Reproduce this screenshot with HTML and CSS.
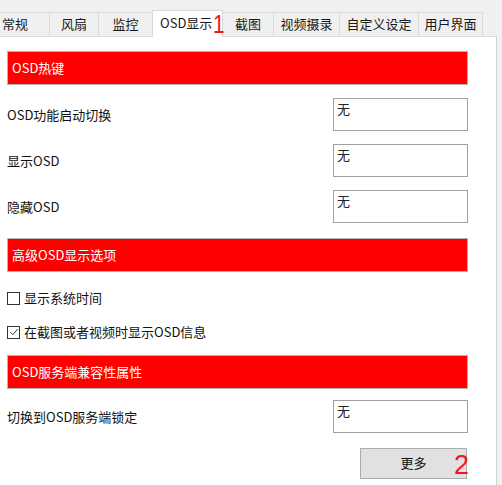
FILE: index.html
```html
<!DOCTYPE html>
<html lang="zh-CN">
<head>
<meta charset="utf-8">
<link rel="stylesheet" href="styles.css">
</head>
<body>
<div class="window">
  <div class="tabs">
    <div class="tab t1">常规</div>
    <div class="tab t2">风扇</div>
    <div class="tab t3">监控</div>
    <div class="tab active t4">OSD显示<span class="mark mark1">1</span></div>
    <div class="tab t5">截图</div>
    <div class="tab t6">视频摄录</div>
    <div class="tab t7">自定义设定</div>
    <div class="tab t8">用户界面</div>
  </div>
  <div class="panel">
    <div class="header h1">OSD热键</div>
    <div class="row r1"><span class="label">OSD功能启动切换</span><div class="field">无</div></div>
    <div class="row r2"><span class="label">显示OSD</span><div class="field">无</div></div>
    <div class="row r3"><span class="label">隐藏OSD</span><div class="field">无</div></div>
    <div class="header h2">高级OSD显示选项</div>
    <div class="check c1"><span class="box"></span><span>显示系统时间</span></div>
    <div class="check c2"><span class="box"><svg viewBox="0 0 12 12" width="10" height="10"><path d="M1.5 6.2 L4.5 9.2 L10.5 2.5" fill="none" stroke="#333" stroke-width="1.2"/></svg></span><span>在截图或者视频时显示OSD信息</span></div>
    <div class="header h3">OSD服务端兼容性属性</div>
    <div class="row r4"><span class="label">切换到OSD服务端锁定</span><div class="field">无</div></div>
    <div class="actions"><div class="button">更多<span class="mark mark2">2</span></div></div>
  </div>
</div>
</body>
</html>
```
FILE: styles.css
```css
html, body {
  margin: 0;
  padding: 0;
  background: #f0f0f0;
  width: 502px;
  height: 485px;
  overflow: hidden;
  font-family: "Noto Sans CJK SC", "Noto Sans", sans-serif;
  font-size: 13px;
  color: #111;
}
.window {
  display: flex;
  flex-direction: column;
  height: 485px;
}
.tabs {
  display: flex;
  height: 24px;
  margin-top: 12px;
  margin-left: -20px;
  align-items: flex-end;
}
.tab {
  position: relative;
  box-sizing: border-box;
  height: 24px;
  line-height: 22px;
  text-align: center;
  background: #f0f0f0;
  border: 1px solid #dadada;
  border-bottom: none;
  margin-right: -1px;
  color: #1a1a1a;
  white-space: nowrap;
}
.t1 { width: 70px; }
.t2 { width: 50px; }
.t3 { width: 55px; }
.t4 { width: 71px; }
.t5 { width: 52px; }
.t6 { width: 67px; }
.t7 { width: 80px; }
.t8 { width: 65px; }
.tab.active {
  background: #fff;
  height: 27px;
  line-height: 24px;
  margin-bottom: -1px;
  z-index: 2;
  text-align: left;
  padding-left: 7px;
}
.mark {
  position: absolute;
  color: #f0141e;
  font-family: "Liberation Sans", sans-serif;
  font-size: 25px;
  line-height: 25px;
}
.mark1 { left: 60px; top: 1px; font-size: 26px; transform: scaleX(0.8); transform-origin: left; }
.mark2 { right: -3px; top: 4px; font-size: 27px; }
.panel {
  flex: 1;
  width: 497px;
  box-sizing: border-box;
  background: #fff;
  border-top: 1px solid #dadada;
  border-right: 1px solid #d0d0d0;
  padding: 14px 0 0 7px;
}
.header {
  box-sizing: border-box;
  width: 461px;
  height: 34px;
  background: #ff0000;
  border: 1px solid #b4b4b4;
  color: #fff;
  line-height: 31px;
  padding-left: 4px;
}
.h2 { margin-top: 15px; }
.h3 { margin-top: 14px; }
.row {
  display: flex;
  width: 461px;
  justify-content: space-between;
  align-items: center;
  margin-top: 13px;
}
.r2 { margin-top: 13px; }
.r3 { margin-top: 13px; }
.r4 { margin-top: 11px; }
.label { line-height: 18px; }
.field {
  box-sizing: border-box;
  width: 135px;
  height: 33px;
  border: 1px solid #a0a0a0;
  padding: 1px 0 0 3px;
  line-height: 18px;
  color: #222;
}
.check {
  display: flex;
  align-items: center;
  gap: 4px;
  line-height: 18px;
}
.c1 { margin-top: 17px; }
.c2 { margin-top: 16px; }
.box {
  box-sizing: border-box;
  width: 13px;
  height: 13px;
  border: 1px solid #333;
  background: #fff;
  display: flex;
  align-items: center;
  justify-content: center;
}
.actions {
  width: 461px;
  display: flex;
  justify-content: flex-end;
  margin-top: 15px;
}
.button {
  position: relative;
  box-sizing: border-box;
  width: 107px;
  height: 31px;
  margin-right: 1px;
  background: #e1e1e1;
  border: 1px solid #adadad;
  text-align: center;
  line-height: 28px;
  color: #111;
}
```
